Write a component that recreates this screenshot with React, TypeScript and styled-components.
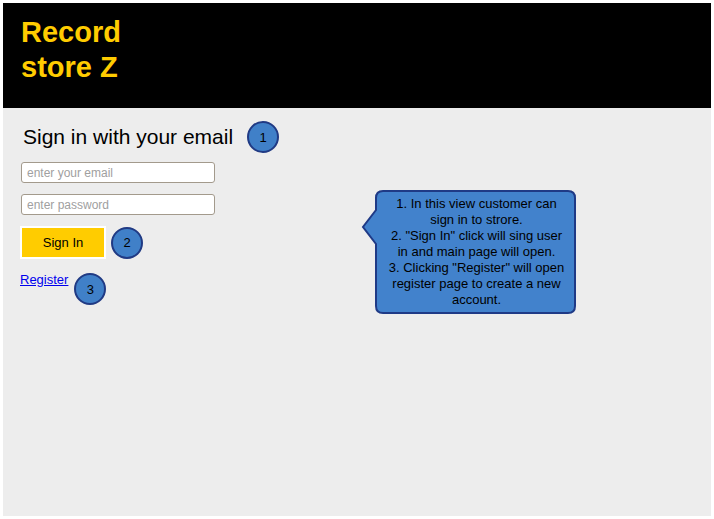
import React from 'react'
import styled, { createGlobalStyle } from 'styled-components'

const GlobalStyle = createGlobalStyle`
  html, body {
    margin: 0;
    padding: 0;
    background: #ffffff;
    font-family: "Liberation Sans", Arial, sans-serif;
  }
`

const Frame = styled.div`
  position: relative;
  margin: 3px;
  width: 708px;
  height: 513px;
  display: flex;
  flex-direction: column;
  background: #ededed;
`

const Header = styled.header`
  height: 105px;
  background: #000000;
  padding: 12px 0 0 18px;
  box-sizing: border-box;
`

const Title = styled.h1`
  margin: 0;
  color: #ffcc00;
  font-size: 29px;
  font-weight: 700;
  line-height: 35px;
`

const Content = styled.main`
  flex: 1;
  padding: 12px 0 0 17px;
  display: flex;
  flex-direction: column;
  align-items: flex-start;
`

const Row = styled.div<{ gap: number }>`
  display: flex;
  align-items: center;
  gap: ${({ gap }) => gap}px;
`

const Heading = styled.h2`
  margin: 0 0 0 3px;
  font-size: 21px;
  font-weight: 400;
  color: #000000;
  line-height: 32px;
`

const Marker = styled.span<{ nudge?: number }>`
  width: 28px;
  height: 28px;
  border-radius: 50%;
  background: #4080c8;
  border: 2px solid #203a84;
  display: inline-flex;
  align-items: center;
  justify-content: center;
  font-size: 13px;
  color: #000000;
  margin-top: ${({ nudge }) => nudge ?? 0}px;
`

const Input = styled.input`
  width: 194px;
  height: 21px;
  box-sizing: border-box;
  border: 1px solid #a39a8c;
  border-radius: 3px;
  background: #ffffff;
  padding: 0 5px;
  font-family: "Liberation Sans", Arial, sans-serif;
  font-size: 12px;
  margin: 0 0 0 1px;
  &::placeholder {
    color: #a0a0a0;
  }
`

const Fields = styled.div`
  display: flex;
  flex-direction: column;
  gap: 11px;
  margin-top: 9px;
`

const Button = styled.button`
  width: 86px;
  height: 33px;
  background: #ffcc00;
  border: 2px solid #ffffff;
  font-family: "Liberation Sans", Arial, sans-serif;
  font-size: 13px;
  color: #000000;
  padding: 0;
`

const Link = styled.a`
  color: #0000ee;
  text-decoration: underline;
  font-size: 13px;
  align-self: flex-start;
`

const Callout = styled.div`
  position: absolute;
  left: 356px;
  top: 184px;
  width: 220px;
  height: 128px;
`

const CalloutText = styled.p`
  position: relative;
  margin: 0;
  padding: 9px 2px 0 17px;
  text-align: center;
  font-size: 13px;
  line-height: 16px;
  color: #000000;
`

const Shape = styled.svg`
  position: absolute;
  left: 0;
  top: 0;
`

export default function App() {
  return (
    <>
      <GlobalStyle />
      <Frame>
        <Header>
          <Title>
            Record
            <br />
            store Z
          </Title>
        </Header>
        <Content>
          <Row gap={14}>
            <Heading>Sign in with your email</Heading>
            <Marker nudge={1}>1</Marker>
          </Row>
          <Fields>
            <Input placeholder="enter your email" />
            <Input type="password" placeholder="enter password" />
          </Fields>
          <Row gap={5} style={{ marginTop: 11 }}>
            <Button>Sign In</Button>
            <Marker>2</Marker>
          </Row>
          <Row gap={6} style={{ marginTop: 13, alignItems: 'flex-start' }}>
            <Link href="#">Register</Link>
            <Marker nudge={1}>3</Marker>
          </Row>
        </Content>
        <Callout>
          <Shape width="220" height="128" viewBox="0 0 220 128">
            <path
              d="M24 4 H209 Q216 4 216 11 V119 Q216 126 209 126 H24 Q17 126 17 119 V57 L4 40 L17 23 V11 Q17 4 24 4 Z"
              fill="#4282cc"
              stroke="#1f3a86"
              strokeWidth="2"
            />
          </Shape>
          <CalloutText>
            1. In this view customer can
            <br />
            sign in to strore.
            <br />
            2. "Sign In" click will sing user
            <br />
            in and main page will open.
            <br />
            3. Clicking "Register" will open
            <br />
            register page to create a new
            <br />
            account.
          </CalloutText>
        </Callout>
      </Frame>
    </>
  )
}
